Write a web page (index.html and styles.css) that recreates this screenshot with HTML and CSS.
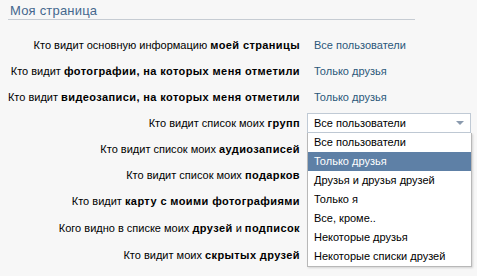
FILE: index.html
```html
<!DOCTYPE html>
<html>
<head lang="ru">
    <meta charset="UTF-8">
    <title>Приватность</title>
    <link rel="stylesheet" href="styles.css">
</head>
<body>
    <section class="wrapper">
        <h2 class="head">Моя страница</h2>
        <ul class="rows">
            <li class="row">
                <span class="label">Кто видит основную информацию <b>моей страницы</b></span>
                <a href="javascript:void(0);" class="value">Все пользователи</a>
            </li>
            <li class="row">
                <span class="label">Кто видит <b>фотографии, на которых меня отметили</b></span>
                <a href="javascript:void(0);" class="value">Только друзья</a>
            </li>
            <li class="row">
                <span class="label">Кто видит <b>видеозаписи, на которых меня отметили</b></span>
                <a href="javascript:void(0);" class="value">Только друзья</a>
            </li>
            <li class="row">
                <span class="label">Кто видит список моих <b>групп</b></span>
                <div class="select">
                    <div class="sel-box">
                        <span>Все пользователи</span>
                        <i class="arrow"></i>
                    </div>
                    <ul class="sel-list">
                        <li>Все пользователи</li>
                        <li class="active">Только друзья</li>
                        <li>Друзья и друзья друзей</li>
                        <li>Только я</li>
                        <li>Все, кроме..</li>
                        <li>Некоторые друзья</li>
                        <li>Некоторые списки друзей</li>
                    </ul>
                </div>
            </li>
            <li class="row">
                <span class="label">Кто видит список моих <b>аудиозаписей</b></span>
            </li>
            <li class="row">
                <span class="label">Кто видит список моих <b>подарков</b></span>
            </li>
            <li class="row">
                <span class="label">Кто видит <b>карту с моими фотографиями</b></span>
            </li>
            <li class="row tall">
                <span class="label">Кого видно в списке моих <b>друзей</b> и <b>подписок</b></span>
            </li>
            <li class="row">
                <span class="label">Кто видит моих <b>скрытых друзей</b></span>
            </li>
        </ul>
    </section>
</body>
</html>
```

FILE: styles.css
```css
body{
    margin: 0;
    background-color: #f7f7f7;
    font-family: "Liberation Sans", Arial, sans-serif;
    font-size: 11px;
    color: #000000;
}
ul{
    margin: 0;
    padding: 0;
    list-style-type: none;
}
a{
    text-decoration: none;
    color: #2b587a;
}
b{
    letter-spacing: 0.4px;
}
.wrapper{
    width: 477px;
    height: 276px;
    overflow: hidden;
}
.head{
    margin: 0 62px 0 8px;
    padding: 3px 0 0 2px;
    height: 16px;
    border-bottom: 1px solid #c6ccd3;
    font-size: 13px;
    font-weight: normal;
    letter-spacing: 0.2px;
    color: #45688e;
    line-height: 16px;
}
.rows{
    padding-top: 12px;
}
.row{
    display: flex;
    align-items: center;
    height: 26px;
    position: relative;
}
.row.tall{
    height: 28px;
}
.label{
    width: 300px;
    text-align: right;
    white-space: nowrap;
}
.value{
    margin-left: 14px;
}
.select{
    margin-left: 7px;
    position: relative;
}
.sel-box{
    display: flex;
    align-items: center;
    justify-content: space-between;
    width: 156px;
    height: 18px;
    border: 1px solid #c0cad5;
    background-color: #ffffff;
    padding-left: 6px;
    color: #000000;
}
.arrow{
    width: 0;
    height: 0;
    margin-right: 6px;
    border-left: 4px solid transparent;
    border-right: 4px solid transparent;
    border-top: 4px solid #8a9aae;
}
.sel-list{
    position: absolute;
    left: 0;
    top: 20px;
    width: 163px;
    background-color: #ffffff;
    border: 1px solid #b8b8b8;
    border-top: none;
    box-shadow: 1px 1px 2px rgba(0, 0, 0, 0.15);
    z-index: 2;
}
.sel-list li{
    height: 19px;
    line-height: 19px;
    padding-left: 6px;
    color: #000000;
}
.sel-list li.active{
    background-color: #5e80a6;
    color: #ffffff;
}
```
